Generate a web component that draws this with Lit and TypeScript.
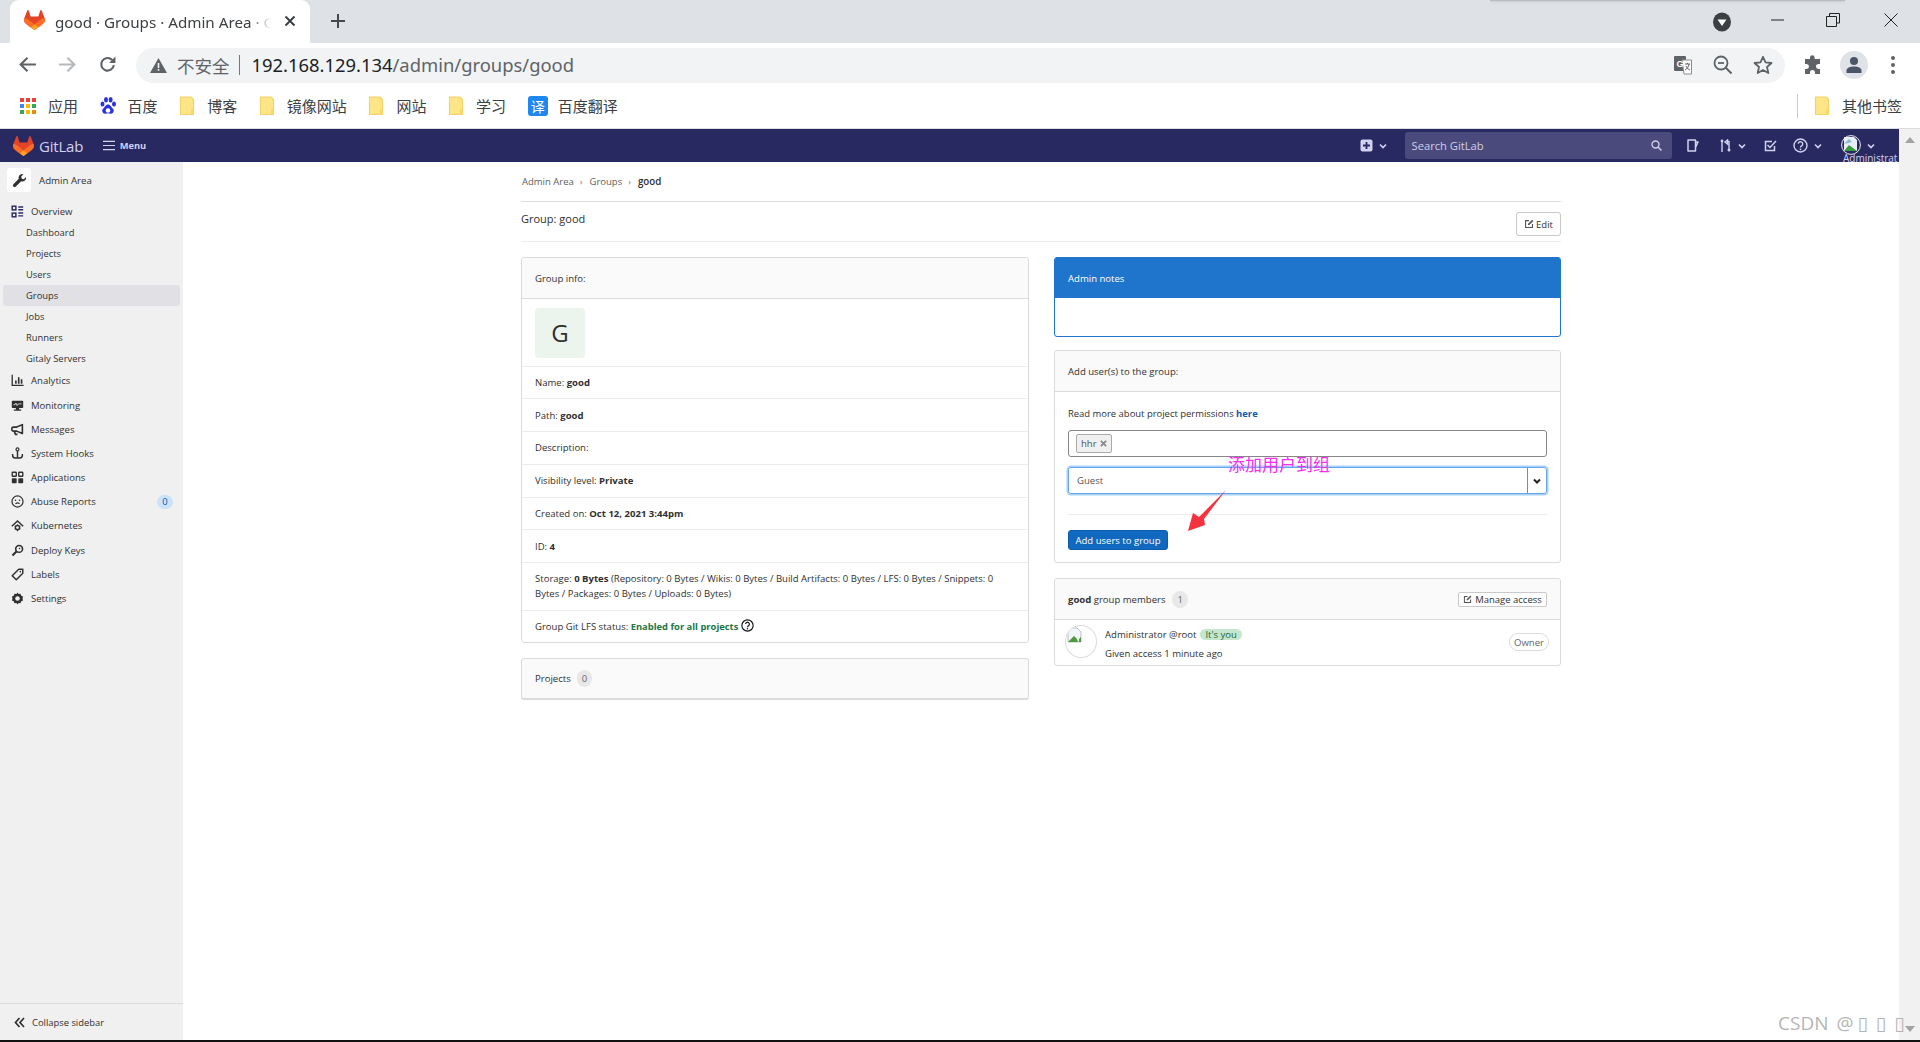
import { LitElement, html, css, svg } from "lit";
import { customElement } from "lit/decorators.js";

const chev = html`<svg class="chev" viewBox="0 0 8 8"><path d="M1 2.500l3 3 3-3" fill="none" stroke="currentColor" stroke-width="1.6"/></svg>`;
const logo = (c: string) => html`<svg class=${c} viewBox="0 0 25 24">
<path d="m24.507 9.5-.034-.09L21.082.562a.896.896 0 0 0-1.694.091l-2.29 7.01H7.825L5.535.653a.898.898 0 0 0-1.694-.09L.451 9.411.416 9.5a6.297 6.297 0 0 0 2.09 7.278l.012.01.03.022 5.16 3.867 2.56 1.935 1.554 1.176a1.051 1.051 0 0 0 1.268 0l1.555-1.176 2.56-1.935 5.197-3.89.014-.01A6.297 6.297 0 0 0 24.507 9.5Z" fill="#E24329"/>
<path d="m24.507 9.5-.034-.09a11.44 11.44 0 0 0-4.56 2.051l-7.447 5.632 4.742 3.584 5.197-3.89.014-.01A6.297 6.297 0 0 0 24.507 9.5Z" fill="#FC6D26"/>
<path d="m7.707 20.677 2.56 1.935 1.555 1.176a1.051 1.051 0 0 0 1.268 0l1.555-1.176 2.56-1.935-4.743-3.584-4.755 3.584Z" fill="#FCA326"/>
<path d="M5.01 11.461a11.43 11.43 0 0 0-4.56-2.05L.416 9.5a6.297 6.297 0 0 0 2.09 7.278l.012.01.03.022 5.16 3.867 4.745-3.584-7.444-5.632Z" fill="#FC6D26"/></svg>`;

const folder = html`<svg class="bm-ico" viewBox="0 0 16 20"><path d="M1.5 1h10.5l2.5 2.5v15h-13z" fill="#fde588" stroke="#f3d26a" stroke-width="1.2" stroke-linejoin="round"/><path d="M12 13h2.5v5.5H12z" fill="#fbd868"/></svg>`;
const apps = html`<svg class="bm-ico" viewBox="0 0 16 16">${[
  ["#ea4335", "#ea4335", "#ea4335"], ["#4285f4", "#fbbc04", "#34a853"], ["#34a853", "#fbbc04", "#ea8a00"],
].map((r, y) => r.map((c, x) => svg`<rect x=${x * 6} y=${y * 6} width="4" height="4" fill=${c}/>`))}</svg>`;
const paw = html`<svg class="bm-ico" viewBox="0 0 16 18" fill="#2932e1"><ellipse cx="2.5" cy="7" rx="2" ry="2.6"/><ellipse cx="6" cy="2.8" rx="2" ry="2.7"/><ellipse cx="10.6" cy="2.8" rx="2" ry="2.7"/><ellipse cx="14" cy="7" rx="2" ry="2.6"/><path d="M8 7.5c2.6 0 3 2.6 4.8 4 2 1.700 .7 5.500-2.300 5.200-1-.1-1.700-.5-2.500-.5s-1.500.4-2.500.5c-3 .3-4.300-3.500-2.300-5.200 1.800-1.400 2.200-4 4.800-4z"/><circle cx="8" cy="13.500" r="2.300" fill="#fff"/></svg>`;

const ic: Record<string, unknown> = {
  overview: svg`<g fill="none" stroke="currentColor" stroke-width="1.800"><rect x="1.500" y="1.500" width="4.500" height="4.500"/><rect x="1.500" y="10" width="4.500" height="4.500"/></g><path d="M9 1.500h6v1.800H9zM9 5h6v1.800H9zM9 9h6v1.800H9zM9 12.500h6v1.800H9z" fill="currentColor"/>`,
  analytics: svg`<path d="M1.500 1v13h14" fill="none" stroke="currentColor" stroke-width="1.600"/><path d="M5 8h2v4H5zM8.500 4h2v8h-2zM12 6.500h2V12h-2z" fill="currentColor"/>`,
  monitor: svg`<rect x="1" y="2" width="14" height="9" rx="1" fill="currentColor"/><path d="M3 7h2l1-2 1.500 3L9 6h4" fill="none" stroke="#f0f0f0" stroke-width="1"/><path d="M6 11h4v2H6zM3.500 13h9v1.500h-9z" fill="currentColor"/>`,
  msg: svg`<path d="M14 2v11L7 10H3a2 2 0 0 1-2-2V7a2 2 0 0 1 2-2h4z" fill="none" stroke="currentColor" stroke-width="2" stroke-linejoin="round"/><path d="M4 10l1.500 4H8" fill="none" stroke="currentColor" stroke-width="2"/>`,
  hook: svg`<circle cx="8" cy="3" r="1.800" fill="none" stroke="currentColor" stroke-width="1.500"/><path d="M8 5v9M2 8.500v1.500a3.500 3.500 0 0 0 3.500 3.500h5A3.500 3.500 0 0 0 14 10V8.500" fill="none" stroke="currentColor" stroke-width="1.800"/>`,
  apps: svg`<g fill="none" stroke="currentColor" stroke-width="1.700"><rect x="1.500" y="1.500" width="5" height="5" rx=".8"/><rect x="9.500" y="1.500" width="5" height="5" rx=".8"/></g><rect x="1" y="9" width="6" height="6" rx=".8" fill="currentColor"/><rect x="9" y="9" width="6" height="6" rx=".8" fill="currentColor"/>`,
  abuse: svg`<circle cx="8" cy="8" r="6.800" fill="none" stroke="currentColor" stroke-width="1.500"/><circle cx="5.500" cy="6.500" r="1" fill="currentColor"/><circle cx="10.500" cy="6.500" r="1" fill="currentColor"/><path d="M5.500 11c1.500-1.500 3.500-1.500 5 0" fill="none" stroke="currentColor" stroke-width="1.300"/>`,
  kube: svg`<path d="M1 9l7-6.500L15 9" fill="none" stroke="currentColor" stroke-width="1.800"/><circle cx="8" cy="10.500" r="2.600" fill="none" stroke="currentColor" stroke-width="1.800"/><path d="M8 6.500v1.500M8 13v2M4.500 8.500l1.300.8M10.200 11.700l1.300.8M4.500 12.500l1.300-.8M10.200 9.300l1.300-.8" stroke="currentColor" stroke-width="1.300"/>`,
  key: svg`<circle cx="10" cy="6" r="4.200" fill="none" stroke="currentColor" stroke-width="2"/><path d="M7 9L1.800 14.200" stroke="currentColor" stroke-width="2.600"/><circle cx="10.500" cy="5.500" r="1" fill="currentColor"/>`,
  label: svg`<path d="M9.500 1.500h5v5l-8 8-5-5z" fill="none" stroke="currentColor" stroke-width="1.800" stroke-linejoin="round"/><circle cx="11.500" cy="4.500" r="1" fill="currentColor"/>`,
  gear: svg`<path d="M8 .5l1.300 2 2.400-.2.900 2.200 2.200 1-.6 2.500.6 2.500-2.200 1-.9 2.200-2.400-.2L8 15.500l-1.300-2-2.400.2-.9-2.200-2.200-1 .6-2.500-.6-2.500 2.200-1 .9-2.200 2.400.2z" fill="currentColor"/><circle cx="8" cy="8" r="2.800" fill="#f0f0f0"/>`,
};

const menu: [string, string][] = [
  ["analytics", "Analytics"], ["monitor", "Monitoring"], ["msg", "Messages"], ["hook", "System Hooks"],
  ["apps", "Applications"], ["abuse", "Abuse Reports"], ["kube", "Kubernetes"], ["key", "Deploy Keys"],
  ["label", "Labels"], ["gear", "Settings"],
];
const subs = ["Dashboard", "Projects", "Users", "Groups", "Jobs", "Runners", "Gitaly Servers"];
const editIcon = html`<svg class="edit-ico" viewBox="0 0 16 16"><path d="M8 2.500H2.500v11h11V8" fill="none" stroke="currentColor" stroke-width="1.800"/><path d="M6.500 9.500v-2L13 1l2 2-6.500 6.500z" fill="currentColor"/></svg>`;

@customElement("app-root")
export class AppRoot extends LitElement {
  static styles = css`
    :host { display: flex; flex-direction: column; width: 1920px; height: 1042px; overflow: hidden; position: relative; background: #fff;
      font-family: "Open Sans", "Noto Sans CJK SC", sans-serif; font-size: 9.550px; color: #303030; }
    svg { display: block; flex: none; }
    .tabstrip { height: 43px; background: #dee1e6; display: flex; padding-left: 10px; position: relative; flex: none; }
    .tab { width: 300px; height: 43px; background: #fff; border-radius: 9px 9px 0 0; display: flex; align-items: center; padding-left: 14px; box-sizing: border-box; }
    .tab-logo { width: 21px; height: 20px; margin-top: -3px; }
    .tab-title { width: 216px; margin-left: 10px; white-space: nowrap; overflow: hidden; font: 15.200px "Noto Sans", "Noto Sans CJK SC", sans-serif; color: #3c4043; margin-top: 1px;
      -webkit-mask-image: linear-gradient(90deg, #000 90%, transparent); mask-image: linear-gradient(90deg, #000 90%, transparent); }
    .tab-x { width: 12px; height: 12px; margin-left: 13px; color: #3c4043; margin-top: -2px; }
    .newtab { width: 16px; height: 16px; margin: 13px 0 0 20px; color: #45484c; }
    .shadow { position: absolute; left: 1490px; width: 355px; top: 0; height: 1px; background: #b9bcc0; box-shadow: 0 1px 2px #bfc2c6; }
    .winctl { margin-left: auto; display: flex; align-items: center; height: 40px; padding-right: 22px; color: #222; }
    .dl { width: 18px; height: 20px; margin-top: 3px; }
    .wmin { width: 14px; height: 14px; margin-left: 40.500px; }
    .wmax { width: 14px; height: 14px; margin-left: 41px; }
    .wclose { width: 14px; height: 14px; margin-left: 44px; }

    .toolbar { height: 43px; display: flex; align-items: center; flex: none; padding-left: 18px; color: #5f6368; }
    .tb { width: 19px; height: 19px; }
    .tb.fwd { margin-left: 21px; color: #b5b8bc; }
    .tb.rel { margin-left: 21px; }
    .omni { margin-left: 19px; width: 1649px; height: 35px; border-radius: 18px; background: #f1f3f4; display: flex; align-items: center; padding: 0 12.500px 0 14px; box-sizing: border-box; margin-top: 1px; }
    .warn { width: 17px; height: 15px; margin-right: 10px; }
    .insecure { font: 17.500px "Noto Sans CJK SC", sans-serif; color: #5f6368; }
    .sep { width: 1px; height: 20px; background: #777; margin: 0 12px 0 9px; }
    .url { font: 18.400px "Noto Sans", sans-serif; color: #5f6368; white-space: nowrap; margin-top: -2px; }
    .url b { font-weight: 400; color: #202124; }
    .omni-r { margin-left: auto; display: flex; align-items: center; color: #5f6368; }
    .o-ic { width: 20px; height: 20px; margin-left: 20px; }
    .puzzle { width: 20px; height: 20px; margin-left: 18px; color: #5f6368; }
    .profile { width: 28px; height: 28px; margin-left: 17px; border-radius: 50%; background: #dfe2e7; display: flex; align-items: center; justify-content: center; color: #4a5568; }
    .kebab { width: 6px; height: 20px; margin-left: 22px; color: #5f6368; }

    .bookmarks { height: 39px; padding-bottom: 3px; display: flex; align-items: center; padding-left: 20px; gap: 21.600px; flex: none; border-bottom: 1px solid #dadce0; box-sizing: content-box; }
    .bm { display: flex; align-items: center; gap: 12px; font: 15px "Noto Sans CJK SC", sans-serif; color: #3c4043; }
    .bm-ico { width: 16px; height: 20px; }
    .yi { width: 20px; height: 20px; border-radius: 3px; background: #1e88f0; color: #fff; font: 14px "Noto Sans CJK SC", sans-serif; display: flex; align-items: center; justify-content: center; margin-right: -2px; }
    .bm-r { margin-left: auto; display: flex; align-items: center; padding-right: 18px; }
    .bm-sep { width: 1px; height: 24px; background: #ccc; margin-right: 16px; }

    .page { flex: 1; display: flex; min-height: 0; }
    .app { flex: 1; display: flex; flex-direction: column; min-width: 0; }
    .scroll { width: 21px; background: #f1f1f1; display: flex; flex-direction: column; justify-content: space-between; align-items: center; padding: 8px 0; box-sizing: border-box; }
    .arrow-up { width: 0; height: 0; border: 5px solid transparent; border-top: 0; border-bottom: 6px solid #a3a3a3; }
    .arrow-dn { width: 0; height: 0; border: 5px solid transparent; border-bottom: 0; border-top: 6px solid #a3a3a3; }
    .bottom { height: 2px; background: #111; flex: none; }

    .nav { height: 33px; background: #292961; display: flex; align-items: center; color: #d1d1f0; flex: none; padding-left: 13px; padding-right: 24px; overflow: hidden; }
    .nav-logo { width: 21px; height: 20px; }
    .nav-name { font: 15px "Open Sans", sans-serif; margin-left: 5px; letter-spacing: -.2px; }
    .ham { width: 12px; height: 11px; margin-left: 20px; }
    .menu-t { font-weight: 700; font-size: 9.300px; margin-left: 4.500px; }
    .nav-r { margin-left: auto; display: flex; align-items: center; }
    .chev { width: 8px; height: 8px; margin-left: 6px; }
    .n-ic { width: 13px; height: 13px; }
    .search { width: 267px; height: 27px; margin-left: 18px; margin-right: 15px; background: #4b4a7d; border-radius: 3px; display: flex; align-items: center; justify-content: space-between; padding: 0 10px 0 7px; box-sizing: border-box; font-size: 11.200px; color: #cfcfe8; }
    .s-ic { width: 11px; height: 11px; }
    .ml-mr { margin-left: 19px; }
    .ml-todo { margin-left: 18.500px; }
    .ml-help { margin-left: 16px; width: 15px; height: 15px; }
    .ml-av { margin-left: 19px; }
    .av-wrap { position: relative; width: 20px; height: 20px; margin-top: -1px; }
    .av-name { position: absolute; left: 2px; top: 17px; font-size: 10px; white-space: nowrap; width: 55px; height: 12px; overflow: hidden; line-height: 12px; }

    .body { flex: 1; display: flex; min-height: 0; }
    .side { width: 183px; background: #f0f0f0; display: flex; flex-direction: column; flex: none; padding-top: 6px; box-sizing: border-box; }
    .side-h { display: flex; align-items: center; padding-left: 7px; gap: 8px; font-weight: 400; font-size: 9.700px; height: 24px; flex: none; }
    .side-h span { margin-top: 1px; }
    .side-box { width: 24px; height: 24px; background: #fff; border-radius: 3px; display: flex; align-items: center; justify-content: center; }
    .wrench { width: 15px; height: 15px; color: #303030; }
    .item { height: 24.200px; display: flex; align-items: center; padding-left: 11px; gap: 7px; flex: none; position: relative; }
    .item.ov { height: 21.500px; margin-top: 9px; color: #292961; }
    .item.ov span { color: #303030; }
    .ico { width: 13px; height: 13px; color: #303030; }
    .ov .ico { color: #292961; }
    .sub { height: 20.900px; display: flex; align-items: center; padding-left: 26px; flex: none; font-size: 9.400px; }
    .sub.on { background: #e1e1e5; border-radius: 3px; margin: 0 3px; padding-left: 23px; }
    .badge0 { position: absolute; left: 157px; top: 5px; width: 16px; height: 14px; border-radius: 7px; background: #cbe2f9; color: #0b5cad; font-size: 9.500px; display: flex; align-items: center; justify-content: center; }
    .foot { margin-top: auto; border-top: 1px solid #dbdbdb; height: 37px; display: flex; align-items: center; padding-left: 14px; padding-top: 1px; box-sizing: border-box; gap: 7px; font-size: 9.400px; flex: none; }
    .dbl { width: 11px; height: 11px; }

    .main { flex: 1; min-width: 0; overflow: hidden; }
    .wrap { width: 1040px; margin: 0 auto; }
    .crumbs { height: 39px; border-bottom: 1px solid #dbdbdb; display: flex; align-items: center; padding-left: 1px; font-size: 9.500px; color: #5e5e5e; }
    .crumbs i { font-style: normal; margin: 0 7px 0 6px; font-size: 9px; color: #777; }
    .crumbs b { color: #303030; font-weight: 600; font-size: 9.800px; }
    .title { border-bottom: 1px solid #ececec; display: flex; justify-content: space-between; font-size: 11px; padding-top: 10px; box-sizing: content-box; height: 29px; line-height: 13px; }
    .btn { height: 24px; box-sizing: border-box; border: 1px solid #c9c9c9; border-radius: 3px; display: flex; align-items: center; justify-content: center; gap: 2px; font-size: 9.500px; color: #303030; background: #fff; }
    .edit { width: 45px; }
    .edit-ico { width: 10px; height: 10px; color: #555; }
    .grid { display: grid; grid-template-columns: 508px 507px; column-gap: 25px; margin-top: 15px; }
    .col { display: flex; flex-direction: column; }
    .panel { border: 1px solid #dbdbdb; border-radius: 3px; box-sizing: border-box; background: #fff; }
    .ph { height: 41px; box-sizing: border-box; background: #fafafa; border-bottom: 1px solid #dbdbdb; display: flex; align-items: center; padding-left: 13px; border-radius: 3px 3px 0 0; }
    .row { min-height: 32.750px; box-sizing: border-box; border-bottom: 1px solid #ececec; display: flex; align-items: center; padding: 0 13px; }
    .row > div { flex: 1; }
    .row b { font-weight: 700; }
    .row:last-child { border-bottom: 0; }
    .av-row { height: 67.500px; padding-top: 1px; }
    .g-av { width: 50px; height: 50px; border-radius: 4px; background: #ecf4ee; font-size: 24px; display: flex; align-items: center; justify-content: center; flex: none !important; color: #303030; }
    .storage { height: 47.500px; line-height: 15.500px; }
    .lfs { min-height: 31px; display: flex; gap: 3px; }
    .lfs b { color: #217645; font-size: 9.400px; }
    .q { width: 13px; height: 13px; margin-top: -2px; color: #111; }
    .projects { margin-top: 15px; height: 42px; background: #fafafa; display: flex; align-items: center; padding-left: 13px; gap: 6px; border-bottom-width: 2px; }
    .pill { background: #e8e8e8; border-radius: 8px; padding: 0 5px; height: 17px; display: flex; align-items: center; color: #666; font-size: 9.500px; }

    .notes { border-color: #1f75cb; height: 80px; }
    .notes .ph { background: #1f75cb; color: #fff; border-bottom: 0; height: 41px; margin: -1px 0 0; padding-top: 1px; }
    .add { margin-top: 13px; height: 213px; }
    .add-b { padding: 0 13px; }
    .read { margin-top: 15px; line-height: 14px; font-size: 9.450px; }
    .read a { color: #0b5cad; font-weight: 700; }
    .tags { margin-top: 9px; height: 27px; box-sizing: border-box; border: 1px solid #868686; border-radius: 3px; display: flex; align-items: center; padding-left: 7px; }
    .tag { height: 19px; box-sizing: border-box; border: 1px solid #aaa; border-radius: 2px; background: #f0f0f0; display: flex; align-items: center; gap: 3px; padding: 0 4px; color: #555; }
    .x { width: 7px; height: 7px; color: #888; }
    .sel { margin-top: 10px; height: 27px; box-sizing: border-box; border: 1px solid #63a6e9; border-radius: 3px; box-shadow: 0 0 0 1.500px #a8d0fb; display: flex; align-items: center; padding-left: 8px; color: #555; }
    .sel-btn { margin-left: auto; width: 18px; height: 100%; border-left: 1px solid #888; display: flex; align-items: center; justify-content: center; color: #222; }
    .sel-btn svg { width: 8px; height: 8px; margin: 0; }
    .hr { margin-top: 20px; border-top: 1px solid #ececec; }
    .primary { margin-top: 15px; width: 100px; height: 20px; box-sizing: border-box; background: #1068bf; border: 1px solid #0b5cad; border-radius: 3px; color: #fff; font-weight: 500; display: flex; align-items: center; justify-content: center; }
    .members { margin-top: 15px; height: 88px; }
    .mh { justify-content: flex-start; gap: 7px; padding-right: 13px; }
    .mh b { font-weight: 700; }
    .manage { margin-left: auto; width: 89px; height: 15px; border-radius: 2px; gap: 3px; }
    .manage .edit-ico { width: 9px; height: 9px; }
    .m-row { display: flex; padding-left: 10px; padding-right: 10px; padding-top: 5px; }
    .m-av { width: 32px; height: 33px; border-radius: 50%; border: 1px solid #dbdbdb; box-sizing: border-box; overflow: hidden; flex: none; }
    .m-av svg { width: 15px; height: 16px; margin: 1px 0 0 1px; }
    .m-t { margin-left: 8px; line-height: 19px; }
    .you { display: inline-block; margin-left: 4px; background: #c3e6cd; color: #24663b; border-radius: 6px; line-height: 11px; padding: 0 5px; font-size: 9.500px; }
    .owner { margin-left: auto; margin-top: 8px; margin-right: 1px; height: 18px; width: 40px; box-sizing: border-box; border: 1px solid #dbdbdb; border-radius: 9px; display: flex; align-items: center; justify-content: center; color: #666; }

    .anno { position: absolute; left: 1228px; top: 452px; font: 17px "Noto Sans CJK SC", sans-serif; color: #f52ef0; line-height: 24px; white-space: nowrap; }
    .red { position: absolute; left: 1186px; top: 488px; width: 42px; height: 45px; }
    .wm { position: absolute; left: 1778px; top: 1010px; font: 19px "Open Sans", "DejaVu Sans", sans-serif; color: #b5b5b5; white-space: nowrap; word-spacing: 3px; }
    .wm span { margin-left: 4px; }
  `;

  render() {
    return html`
      <div class="tabstrip">
        <div class="tab">
          ${logo("tab-logo")}
          <div class="tab-title">good · Groups · Admin Area · GitLab</div>
          <svg class="tab-x" viewBox="0 0 12 12"><path d="M1.500 1.500l9 9M10.500 1.500l-9 9" stroke="currentColor" stroke-width="2"/></svg>
        </div>
        <svg class="newtab" viewBox="0 0 16 16"><path d="M8 1v14M1 8h14" stroke="currentColor" stroke-width="2"/></svg>
        <div class="shadow"></div>
        <div class="winctl">
          <svg class="dl" viewBox="0 0 18 20"><ellipse cx="9" cy="10" rx="9" ry="9.500" fill="#3c4043"/><path d="M4.500 7.500h9L9 14z" fill="#fff"/></svg>
          <svg class="wmin" viewBox="0 0 14 14"><path d="M0 7h13" stroke="currentColor" stroke-width="1"/></svg>
          <svg class="wmax" viewBox="0 0 14 14"><path d="M3.500 3V.5h10v9.500H11M.5 3.500h10v10H.5z" fill="none" stroke="currentColor"/></svg>
          <svg class="wclose" viewBox="0 0 14 14"><path d="M.5.500l13 13M13.500.500l-13 13" stroke="currentColor"/></svg>
        </div>
      </div>

      <div class="toolbar">
        <svg class="tb" viewBox="0 0 18 18"><path d="M17 9H3M9 2.500L2.500 9 9 15.500" fill="none" stroke="currentColor" stroke-width="2"/></svg>
        <svg class="tb fwd" viewBox="0 0 18 18"><path d="M1 9h14M9 2.500L15.500 9 9 15.500" fill="none" stroke="currentColor" stroke-width="2"/></svg>
        <svg class="tb rel" viewBox="0 0 18 18"><path d="M15 9.500A6 6 0 1 1 13.500 4.800" fill="none" stroke="currentColor" stroke-width="2"/><path d="M16.500 1.500v6h-6z" fill="currentColor"/></svg>
        <div class="omni">
          <svg class="warn" viewBox="0 0 17 15"><path d="M8.500 0L17 15H0z" fill="#5f6368"/><path d="M7.700 5h1.600v5H7.700zM7.700 11h1.600v1.800H7.700z" fill="#f1f3f4"/></svg>
          <span class="insecure">不安全</span>
          <div class="sep"></div>
          <span class="url"><b>192.168.129.134</b>/admin/groups/good</span>
          <div class="omni-r">
            <svg class="o-ic" viewBox="0 0 20 20"><rect x="1" y="1" width="12" height="15" rx="1" fill="#5f6368"/><path d="M9 5h9.500v14H11z" fill="#fff" stroke="#8a8d91"/><text x="3.500" y="12" font-size="9" font-weight="700" fill="#fff" font-family="Liberation Sans">G</text><path d="M12 9h5M14.500 8v1M16 9c-.5 3-2 5-4 6M13 11c.7 2 2 3 4 4" fill="none" stroke="#5f6368" stroke-width="1"/></svg>
            <svg class="o-ic" viewBox="0 0 20 20"><circle cx="8" cy="8" r="6.500" fill="none" stroke="currentColor" stroke-width="1.800"/><path d="M12.500 12.500L18.500 18.500" stroke="currentColor" stroke-width="2"/><path d="M5 8h6" stroke="currentColor" stroke-width="1.800"/></svg>
            <svg class="o-ic" viewBox="0 0 20 20"><path d="M10 1.800l2.500 5.600 6 .6-4.500 4 1.300 6L10 15l-5.300 3 1.300-6-4.500-4 6-.6z" fill="none" stroke="currentColor" stroke-width="1.800" stroke-linejoin="round"/></svg>
          </div>
        </div>
        <svg class="puzzle" viewBox="0 0 20 20"><path d="M7 2.500a2.300 2.300 0 0 1 4.600 0V4H17v5h-1.500a2.500 2.500 0 0 0 0 5H17v5h-5v-1.500a2.500 2.500 0 0 0-5 0V19H2v-5h1.500a2.500 2.500 0 0 0 0-5H2V4h5z" fill="currentColor"/></svg>
        <div class="profile"><svg width="18" height="18" viewBox="0 0 18 18"><circle cx="9" cy="5" r="4" fill="currentColor"/><path d="M1.500 17v-2.500C1.500 12 5 10.500 9 10.500s7.500 1.500 7.500 4V17z" fill="currentColor"/></svg></div>
        <svg class="kebab" viewBox="0 0 6 20" fill="currentColor"><circle cx="3" cy="3" r="2"/><circle cx="3" cy="10" r="2"/><circle cx="3" cy="17" r="2"/></svg>
      </div>

      <div class="bookmarks">
        <div class="bm">${apps}<span>应用</span></div>
        <div class="bm">${paw}<span>百度</span></div>
        <div class="bm">${folder}<span>博客</span></div>
        <div class="bm">${folder}<span>镜像网站</span></div>
        <div class="bm">${folder}<span>网站</span></div>
        <div class="bm">${folder}<span>学习</span></div>
        <div class="bm"><div class="yi">译</div><span>百度翻译</span></div>
        <div class="bm-r"><div class="bm-sep"></div><div class="bm">${folder}<span>其他书签</span></div></div>
      </div>

      <div class="page">
        <div class="app">
          <div class="nav">
            ${logo("nav-logo")}
            <span class="nav-name">GitLab</span>
            <svg class="ham" viewBox="0 0 13 11"><path d="M0 1h13M0 5.500h13M0 10h13" stroke="currentColor" stroke-width="1.300"/></svg>
            <span class="menu-t">Menu</span>
            <div class="nav-r">
              <svg class="n-ic" viewBox="0 0 13 13"><rect width="12" height="12" x=".5" y=".5" rx="2" fill="currentColor"/><path d="M6.500 3v7M3 6.500h7" stroke="#292961" stroke-width="1.800"/></svg>
              ${chev}
              <div class="search"><span>Search GitLab</span><svg class="s-ic" viewBox="0 0 11 11"><circle cx="4.500" cy="4.500" r="3.500" fill="none" stroke="currentColor" stroke-width="1.400"/><path d="M7 7l3.500 3.500" stroke="currentColor" stroke-width="1.500"/></svg></div>
              <svg class="n-ic" viewBox="0 0 13 13"><path d="M1 1h7.500v11H1z M8.500 3H11L8.500 8.500" fill="none" stroke="currentColor" stroke-width="1.500" stroke-linejoin="round"/></svg>
              <svg class="n-ic ml-mr" viewBox="0 0 13 13"><path d="M3 3v10M10 5v5M6 3l2.500-2v4z" fill="none" stroke="currentColor" stroke-width="1.400"/><circle cx="3" cy="2" r="1.400" fill="currentColor"/><circle cx="10" cy="11" r="1.500" fill="currentColor"/><path d="M8 2.500h2V5" fill="none" stroke="currentColor" stroke-width="1.400"/></svg>
              ${chev}
              <svg class="n-ic ml-todo" viewBox="0 0 13 13"><path d="M10.500 7v4.500h-9v-9H8" fill="none" stroke="currentColor" stroke-width="1.500"/><path d="M3.500 6l2.500 2.500L12 2" fill="none" stroke="currentColor" stroke-width="1.500"/></svg>
              <svg class="n-ic ml-help" viewBox="0 0 15 15"><circle cx="7.500" cy="7.500" r="6.500" fill="none" stroke="currentColor" stroke-width="1.400"/><path d="M5.300 5.800a2.200 2.200 0 1 1 3.300 2c-.8.500-1.100.9-1.100 1.700" fill="none" stroke="currentColor" stroke-width="1.400"/><circle cx="7.500" cy="11.300" r=".9" fill="currentColor"/></svg>
              ${chev}
              <div class="av-wrap ml-av">
                <svg width="20" height="20" viewBox="0 0 20 20"><circle cx="10" cy="10" r="9.400" fill="#292961" stroke="#fff" stroke-width=".9"/><path d="M3 2h10l3 3v11H3z" fill="#e8eef7"/><path d="M3 16l5-6 4 3 4 3z" fill="#3c9a3c"/><path d="M3 9l5-5 3 3" fill="#8ab4d8"/></svg>
                <div class="av-name">Administrator</div>
              </div>
              ${chev}
            </div>
          </div>

          <div class="body">
            <div class="side">
              <div class="side-h">
                <div class="side-box"><svg class="wrench" viewBox="0 0 16 16"><path d="M11 1a4 4 0 0 0-3.800 5.200L1.500 11.900a1.800 1.800 0 0 0 2.600 2.600l5.700-5.700A4 4 0 0 0 15 4.200l-2.400 2.400-2.200-.6-.6-2.200L12.200 1.400A4 4 0 0 0 11 1z" fill="currentColor"/></svg></div>
                <span>Admin Area</span>
              </div>
              <div class="item ov"><svg class="ico" viewBox="0 0 16 16">${ic.overview}</svg><span>Overview</span></div>
              ${subs.map((s) => html`<div class="sub ${s === "Groups" ? "on" : ""}">${s}</div>`)}
              ${menu.map(([k, t]) => html`<div class="item"><svg class="ico" viewBox="0 0 16 16">${ic[k]}</svg><span>${t}</span>${t === "Abuse Reports" ? html`<div class="badge0">0</div>` : ""}</div>`)}
              <div class="foot">
                <svg class="dbl" viewBox="0 0 11 11"><path d="M5.500 1L1.500 5.500l4 4.500M10 1L6 5.500l4 4.500" fill="none" stroke="#303030" stroke-width="1.700"/></svg>
                <span>Collapse sidebar</span>
              </div>
            </div>

            <div class="main"><div class="wrap">
              <div class="crumbs"><span>Admin Area</span><i>›</i><span>Groups</span><i>›</i><b>good</b></div>
              <div class="title"><span>Group: good</span><div class="btn edit">${editIcon}Edit</div></div>
              <div class="grid">
                <div class="col">
                  <div class="panel">
                    <div class="ph">Group info:</div>
                    <div class="row av-row"><div class="g-av">G</div></div>
                    <div class="row"><div>Name: <b>good</b></div></div>
                    <div class="row"><div>Path: <b>good</b></div></div>
                    <div class="row"><div>Description:</div></div>
                    <div class="row"><div>Visibility level: <b>Private</b></div></div>
                    <div class="row"><div>Created on: <b>Oct 12, 2021 3:44pm</b></div></div>
                    <div class="row"><div>ID: <b>4</b></div></div>
                    <div class="row storage"><div>Storage: <b>0 Bytes</b> (Repository: 0 Bytes / Wikis: 0 Bytes / Build Artifacts: 0 Bytes / LFS: 0 Bytes / Snippets: 0<br>Bytes / Packages: 0 Bytes / Uploads: 0 Bytes)</div></div>
                    <div class="row lfs"><span>Group Git LFS status: <b>Enabled for all projects</b></span><svg class="q" viewBox="0 0 15 15"><circle cx="7.500" cy="7.500" r="6.500" fill="none" stroke="currentColor" stroke-width="1.300"/><path d="M5.300 5.800a2.200 2.200 0 1 1 3.300 2c-.8.500-1.100.9-1.100 1.700" fill="none" stroke="currentColor" stroke-width="1.300"/><circle cx="7.500" cy="11.300" r=".9" fill="currentColor"/></svg></div>
                  </div>
                  <div class="panel projects"><span>Projects</span><span class="pill">0</span></div>
                </div>
                <div class="col">
                  <div class="panel notes"><div class="ph">Admin notes</div></div>
                  <div class="panel add">
                    <div class="ph">Add user(s) to the group:</div>
                    <div class="add-b">
                      <div class="read">Read more about project permissions <a>here</a></div>
                      <div class="tags"><div class="tag">hhr<svg class="x" viewBox="0 0 8 8"><path d="M1 1l6 6M7 1L1 7" stroke="currentColor" stroke-width="2"/></svg></div></div>
                      <div class="sel">Guest<div class="sel-btn"><svg viewBox="0 0 8 8"><path d="M1 2.500l3 3 3-3" fill="none" stroke="currentColor" stroke-width="2"/></svg></div></div>
                      <div class="hr"></div>
                      <div class="primary">Add users to group</div>
                    </div>
                  </div>
                  <div class="panel members">
                    <div class="ph mh"><span><b>good</b> group members</span><span class="pill">1</span><div class="btn manage">${editIcon}Manage access</div></div>
                    <div class="m-row">
                      <div class="m-av"><svg viewBox="0 0 15 16"><path d="M1 1h9l4 4v10H1z" fill="#f2f5f9" stroke="#a9aeb5" stroke-width=".8"/><path d="M1 15l6-6 3 3 1 3z" fill="#4b9a3c"/><path d="M12 12l2-2v5h-2z" fill="#4b9a3c"/></svg></div>
                      <div class="m-t">
                        <div>Administrator @root<span class="you">It's you</span></div>
                        <div>Given access 1 minute ago</div>
                      </div>
                      <div class="owner">Owner</div>
                    </div>
                  </div>
                </div>
              </div>
            </div></div>
          </div>
        </div>
        <div class="scroll"><div class="arrow-up"></div><div class="arrow-dn"></div></div>
      </div>
      <div class="bottom"></div>

      <div class="anno">添加用户到组</div>
      <svg class="red" viewBox="0 0 42 45"><path d="M40 2L18 31l1 6-17 6 5-18 6 4z" fill="#f5333f"/></svg>
      <div class="wm">CSDN @<span>▯ ▯ ▯</span></div>
    `;
  }
}
